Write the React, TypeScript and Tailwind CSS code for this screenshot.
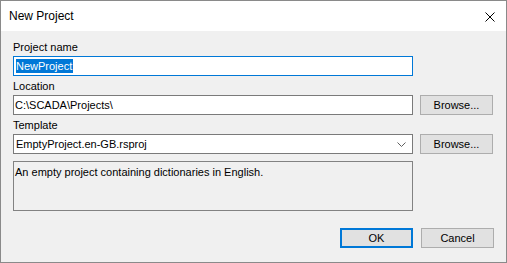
export default function App() {
  return (
    <div className="w-[507px] h-[263px] border border-[#8a8a8a] flex flex-col font-['Liberation_Sans',Arial,sans-serif] text-black">
      {/* Title bar */}
      <div className="h-[30px] bg-white flex items-center justify-between pl-[8px] pr-[11px]">
        <span className="text-[12px] leading-[14px]">New Project</span>
        <svg width="10" height="10" viewBox="0 0 10 10" className="mt-[1px]">
          <path d="M0.5 0.5 L9.5 9.5 M9.5 0.5 L0.5 9.5" stroke="#000" strokeWidth="1" fill="none" />
        </svg>
      </div>

      {/* Body */}
      <div className="flex-1 bg-[#f0f0f0] pt-[10px] px-[12px] text-[11px]">
        <div className="leading-[13px]">Project name</div>
        <div className="mt-[2px] flex">
          <div className="w-[400px] h-[20px] bg-white border border-[#0078d7] flex items-center pl-[2px]">
            <span className="bg-[#0078d7] text-white h-[14px] leading-[14px] pr-[1px]">NewProject</span>
          </div>
        </div>

        <div className="mt-[4px] leading-[13px]">Location</div>
        <div className="mt-[2px] flex gap-[7px]">
          <div className="w-[400px] h-[20px] bg-white border border-[#7a7a7a] flex items-center pl-[1px] leading-[18px]">
            C:\SCADA\Projects\
          </div>
          <Button>Browse...</Button>
        </div>

        <div className="mt-[4px] leading-[13px]">Template</div>
        <div className="mt-[2px] flex gap-[7px]">
          <div className="w-[400px] h-[20px] bg-white border border-[#7a7a7a] flex items-center justify-between pl-[2px] pr-[6px] leading-[18px]">
            <span>EmptyProject.en-GB.rsproj</span>
            <svg width="9" height="5" viewBox="0 0 9 5">
              <path d="M0.5 0.5 L4.5 4.5 L8.5 0.5" stroke="#606060" strokeWidth="1" fill="none" />
            </svg>
          </div>
          <Button>Browse...</Button>
        </div>

        <div className="mt-[7px] w-[400px] h-[50px] border border-[#828282] pl-[1px] leading-[20px]">
          An empty project containing dictionaries in English.
        </div>

        <div className="mt-[17px] flex justify-end gap-[8px]">
          <button className="w-[73px] h-[20px] bg-[#e1e1e1] border-2 border-[#0078d7] text-[11px] leading-[16px]">
            OK
          </button>
          <Button>Cancel</Button>
        </div>
      </div>
    </div>
  );
}

function Button({ children }: { children: React.ReactNode }) {
  return (
    <button className="w-[73px] h-[20px] bg-[#e1e1e1] border border-[#adadad] text-[11px] leading-[18px]">
      {children}
    </button>
  );
}
